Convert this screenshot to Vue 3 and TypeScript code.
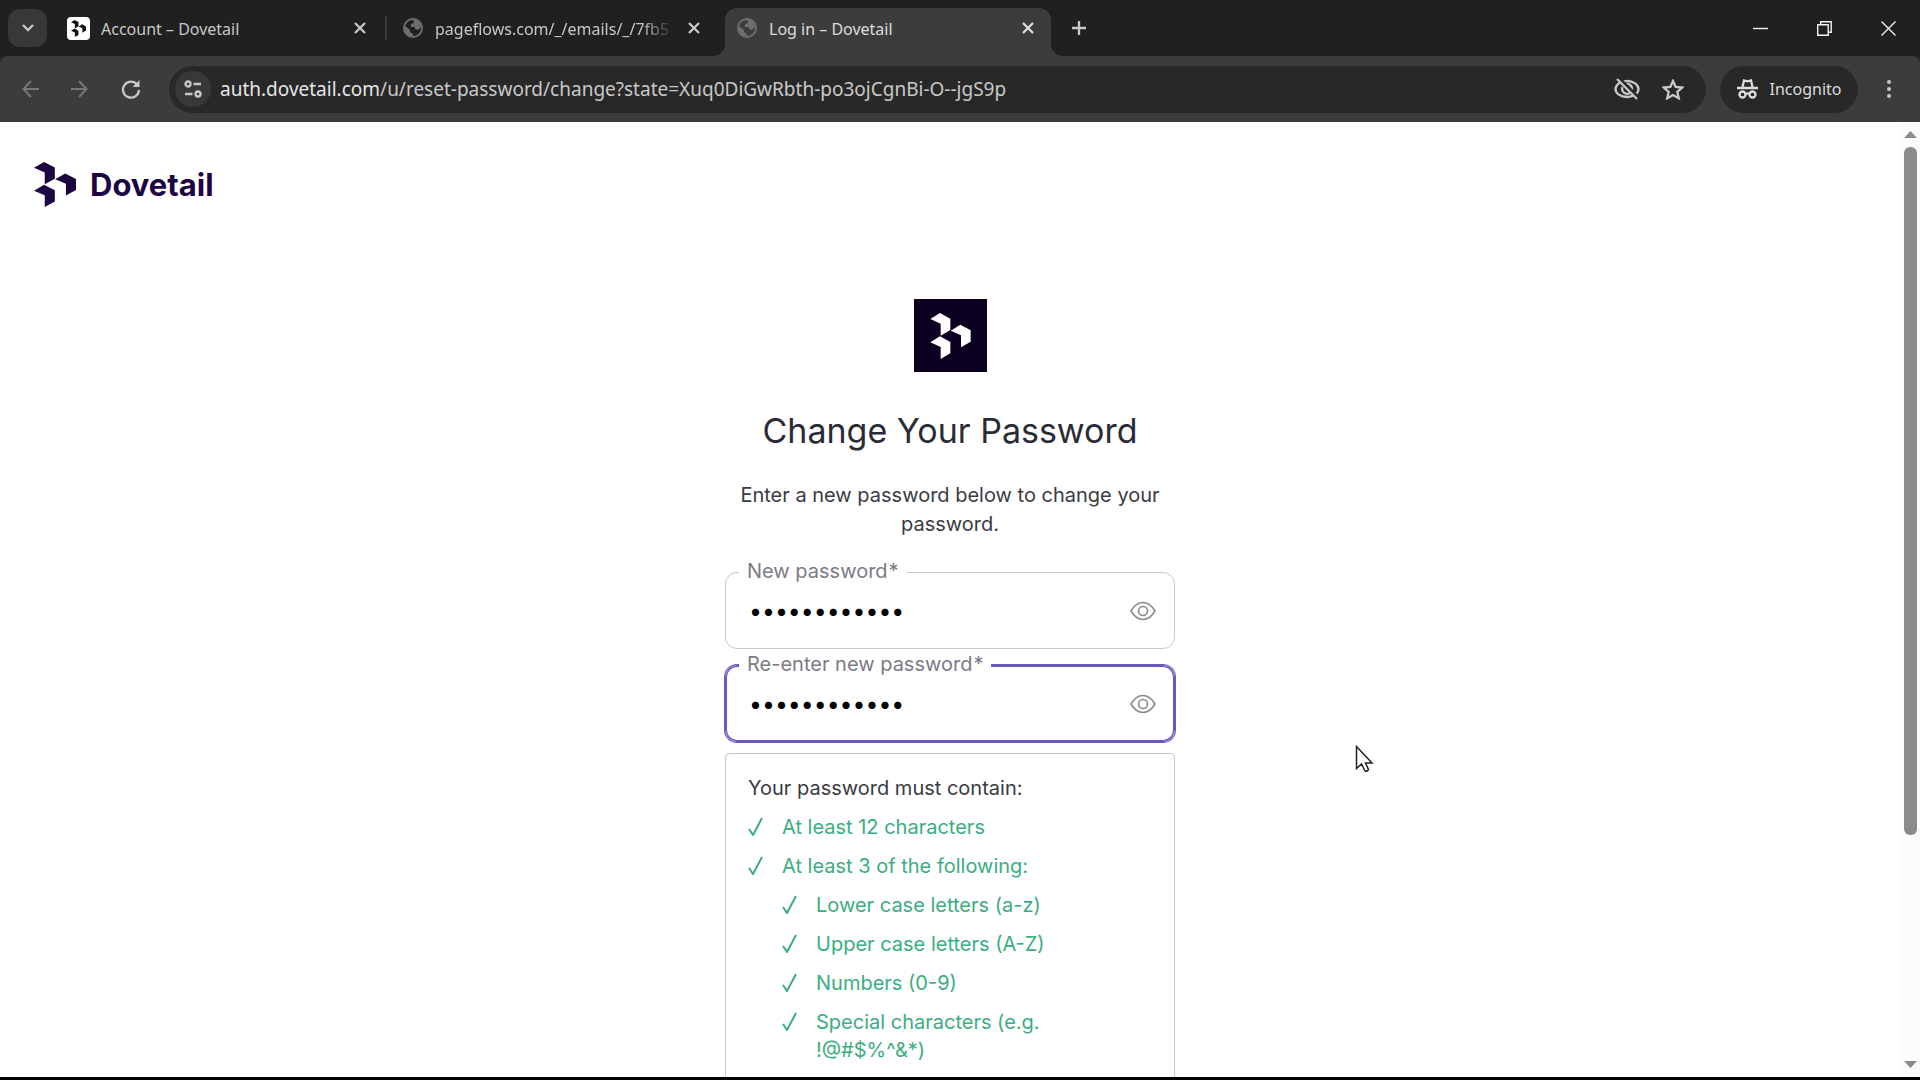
<script setup lang="ts">
import { ref } from 'vue'

interface Tab {
  title: string
  icon: 'dovetail' | 'globe'
  active: boolean
}

interface Field {
  id: string
  label: string
  focused: boolean
}

const tabs: Tab[] = [
  { title: 'Account – Dovetail', icon: 'dovetail', active: false },
  { title: 'pageflows.com/_/emails/_/7fb5', icon: 'globe', active: false },
  { title: 'Log in – Dovetail', icon: 'globe', active: true },
]

const fields: Field[] = [
  { id: 'password', label: 'New password', focused: false },
  { id: 'password-confirm', label: 'Re-enter new password', focused: true },
]

const values = ref<string[]>(['Dovetail2024', 'Dovetail2024'])

const rules: string[] = ['At least 12 characters', 'At least 3 of the following:']
const subRules: string[] = [
  'Lower case letters (a-z)',
  'Upper case letters (A-Z)',
  'Numbers (0-9)',
  'Special characters (e.g. !@#$%^&*)',
]

const mark =
  'M0 18 29 0 60 17V51L31 68V32ZM61 53 90 35 121 52V86L92 103V67ZM0 88 29 70 60 87V121L31 138V102Z'
const check = 'M1 12 5 18 14 1'
</script>

<template>
  <div class="window">
    <header class="tabstrip">
      <button class="tab-search" aria-label="Search tabs">
        <svg width="14" height="10" viewBox="0 0 14 10"><path d="M2 2l5 5 5-5" class="line thick" /></svg>
      </button>
      <div class="tabs">
        <div v-for="tab in tabs" :key="tab.title" class="tab" :class="{ active: tab.active }">
          <span v-if="tab.icon === 'dovetail'" class="favicon tile">
            <svg width="15" height="17" viewBox="0 0 121 138"><path :d="mark" fill="#111" /></svg>
          </span>
          <span v-else class="favicon">
            <svg width="20" height="20" viewBox="0 0 20 20">
              <circle cx="10" cy="10" r="9" fill="none" stroke="#6c6e71" stroke-width="2" />
              <path d="M2 8l5 4v2l3 2v3C5 19 1 15 2 8zM8 1c4 0 7 1 9 4l1 4-3 3-3-1V9H8V6l3-1V3z" fill="#6c6e71" />
            </svg>
          </span>
          <span class="tab-title" :class="{ fading: tab.title.length > 24 }">{{ tab.title }}</span>
          <button class="tab-close" aria-label="Close tab">
            <svg width="12" height="12" viewBox="0 0 12 12"><path d="M1 1l10 10M11 1L1 11" class="line thick" /></svg>
          </button>
        </div>
      </div>
      <button class="new-tab" aria-label="New tab">
        <svg width="14" height="14" viewBox="0 0 14 14"><path d="M7 0v14M0 7h14" class="line thick" /></svg>
      </button>
      <div class="window-controls">
        <button aria-label="Minimize">
          <svg width="15" height="15" viewBox="0 0 15 15"><path d="M0 7.500h15" class="line bright" /></svg>
        </button>
        <button aria-label="Restore">
          <svg width="15" height="15" viewBox="0 0 15 15">
            <path d="M.7 3.700h10.500v10.500H.7zM3.700 3.500V.7h10.500v10.500h-2.800" class="line bright" />
          </svg>
        </button>
        <button aria-label="Close">
          <svg width="15" height="15" viewBox="0 0 15 15"><path d="M.5.5l14 14M14.500.5l-14 14" class="line bright" /></svg>
        </button>
      </div>
    </header>

    <div class="toolbar-back">
      <nav class="toolbar">
        <button class="nav dim" aria-label="Back">
          <svg width="18" height="18" viewBox="0 0 18 18"><path d="M17 9H2M9 1L1.500 9 9 17" class="line" /></svg>
        </button>
        <button class="nav dim" aria-label="Forward">
          <svg width="18" height="18" viewBox="0 0 18 18"><path d="M1 9h15M9 1l7.500 8L9 17" class="line" /></svg>
        </button>
        <button class="nav" aria-label="Reload">
          <svg width="20" height="20" viewBox="0 0 20 20">
            <path d="M16.500 6A8 8 0 1 0 18 11" class="line thick" />
            <path d="M18.500 1v7h-7z" fill="currentColor" />
          </svg>
        </button>
        <div class="address">
          <button class="site-info" aria-label="Site information">
            <svg width="18" height="18" viewBox="0 0 18 18">
              <circle cx="4" cy="4" r="2.500" class="line thick" />
              <circle cx="14" cy="14" r="2.500" class="line thick" />
              <path d="M9.500 4H17M1 14h7.500" class="line thick" />
            </svg>
          </button>
          <p class="url"><b>auth.dovetail.com</b>/u/reset-password/change?state=Xuq0DiGwRbth-po3ojCgnBi-O--jgS9p</p>
          <button class="action" aria-label="Third-party cookies blocked">
            <svg width="26" height="22" viewBox="0 0 26 22">
              <ellipse cx="13" cy="11" rx="11.500" ry="8" class="line thick" />
              <path d="M8.500 9a5 5 0 0 0 8 5.500M12 6a5 5 0 0 1 6 6" class="line thick" />
              <path d="M5 0l19 19" stroke="#282828" stroke-width="3" />
              <path d="M3 1l20 20" class="line thick" />
            </svg>
          </button>
          <button class="action" aria-label="Bookmark this tab">
            <svg width="22" height="21" viewBox="0 0 22 21">
              <path d="M11 2l2.700 6 6.500.6-4.900 4.300 1.500 6.400L11 16l-5.800 3.300 1.500-6.400L1.800 8.600 8.300 8z" class="line thick" />
            </svg>
          </button>
        </div>
        <button class="incognito">
          <svg width="21" height="20" viewBox="0 0 21 20">
            <path d="M5.500 8L7 1.500l3.500.8 3.500-.8L15.500 8M0 9h21" class="line thick" />
            <circle cx="5.500" cy="15.500" r="3" class="line thick" />
            <circle cx="15.500" cy="15.500" r="3" class="line thick" />
            <path d="M8.500 15q2-1.200 4 0" class="line thick" />
          </svg>
          <span>Incognito</span>
        </button>
        <button class="menu" aria-label="Menu">
          <svg width="6" height="20" viewBox="0 0 6 20" fill="currentColor">
            <circle cx="3" cy="3" r="2" /><circle cx="3" cy="10" r="2" /><circle cx="3" cy="17" r="2" />
          </svg>
        </button>
      </nav>
    </div>

    <div class="viewport">
      <div class="page">
        <a href="#" class="brand">
          <svg width="42" height="45" viewBox="0 0 121 138" preserveAspectRatio="none"><path :d="mark" fill="#1c0540" /></svg>
          <span>Dovetail</span>
        </a>

        <main class="card">
          <div class="app-logo">
            <svg width="41" height="46" viewBox="0 0 121 138"><path :d="mark" fill="#fff" /></svg>
          </div>
          <h1>Change Your Password</h1>
          <p class="lead">Enter a new password below to change your password.</p>

          <form @submit.prevent>
            <div v-for="(field, i) in fields" :key="field.id" class="field" :class="{ focused: field.focused }">
              <label :for="field.id">{{ field.label }}<span class="star">*</span></label>
              <input :id="field.id" v-model="values[i]" type="password" autocomplete="off" />
              <button type="button" class="reveal" aria-label="Show password">
                <svg width="26" height="20" viewBox="0 0 26 20">
                  <path d="M1 10Q6 1.500 13 1.500T25 10Q20 18.500 13 18.500T1 10z" />
                  <circle cx="13" cy="10" r="4.500" />
                </svg>
              </button>
            </div>

            <section class="rules">
              <p>Your password must contain:</p>
              <ul>
                <li v-for="rule in rules" :key="rule">
                  <svg width="15" height="19" viewBox="0 0 15 19"><path :d="check" /></svg>
                  <span>{{ rule }}</span>
                </li>
              </ul>
              <ul class="nested">
                <li v-for="rule in subRules" :key="rule">
                  <svg width="15" height="19" viewBox="0 0 15 19"><path :d="check" /></svg>
                  <span>{{ rule }}</span>
                </li>
              </ul>
            </section>
          </form>
        </main>
      </div>

      <div class="scrollbar" aria-hidden="true">
        <svg width="13" height="7" viewBox="0 0 13 7"><path d="M0 7L6.500 0 13 7z" fill="#8b8b8b" /></svg>
        <div class="track"><div class="thumb"></div></div>
        <svg width="13" height="7" viewBox="0 0 13 7"><path d="M0 0h13L6.500 7z" fill="#8b8b8b" /></svg>
      </div>
    </div>

    <svg class="cursor" width="19" height="28" viewBox="0 0 19 28">
      <path d="M1.500 1.500v22l5-4.500 3.500 7q2 1 3.500-1.500L10.500 18h6.500z" fill="#fff" stroke="#222" stroke-width="1.500" />
    </svg>
  </div>
</template>

<style>
body {
  margin: 0;
  background: #000;
  overflow: hidden;
}
</style>

<style scoped>
.window {
  position: relative;
  display: flex;
  flex-direction: column;
  box-sizing: border-box;
  height: 100vh;
  border-bottom: 3px solid #000;
  font-family: 'Noto Sans', 'Open Sans', sans-serif;
  color: #c8c8c8;
}

button {
  display: flex;
  align-items: center;
  justify-content: center;
  flex: none;
  margin: 0;
  padding: 0;
  border: 0;
  background: none;
  color: inherit;
  font: inherit;
}

svg {
  flex: none;
}

.line {
  fill: none;
  stroke: currentColor;
  stroke-width: 2;
}

.thick {
  stroke-width: 2.3;
}

.bright {
  stroke: #f2f2f2;
  stroke-width: 1.4;
}

.tabstrip {
  display: flex;
  flex: none;
  height: 56px;
  background: #202020;
}

.tab-search {
  width: 39px;
  height: 38px;
  margin: 9px 10px 0 8px;
  border-radius: 12px;
  background: #383838;
}

.tabs {
  display: flex;
  gap: 8px;
}

.tab {
  position: relative;
  display: flex;
  align-items: center;
  box-sizing: border-box;
  width: 326px;
  height: 48px;
  margin-top: 8px;
  padding: 0 15px 8px 10px;
  border-radius: 12px 12px 0 0;
}

.tab:first-child::after {
  content: '';
  position: absolute;
  top: 8px;
  right: -4px;
  width: 2px;
  height: 24px;
  background: #3c3c3c;
}

.tab.active {
  background: #3c3c3c;
  color: #dcdcdc;
}

.tab.active::before,
.tab.active::after {
  content: '';
  position: absolute;
  bottom: 0;
  width: 12px;
  height: 12px;
}

.tab.active::before {
  right: 100%;
  background: radial-gradient(circle at 0 0, transparent 12px, #3c3c3c 12px);
}

.tab.active::after {
  left: 100%;
  background: radial-gradient(circle at 100% 0, transparent 12px, #3c3c3c 12px);
}

.favicon {
  display: flex;
  align-items: center;
  justify-content: center;
  flex: none;
  width: 23px;
  height: 23px;
  margin-right: 11px;
}

.tile {
  border-radius: 4px;
  background: #fff;
}

.tab-title {
  flex: 1;
  margin-right: 12px;
  padding-top: 2px;
  font-size: 16px;
  line-height: 24px;
  white-space: nowrap;
}

.fading {
  mask-image: linear-gradient(to right, #000 86%, transparent);
}

.tab-close {
  width: 16px;
  height: 24px;
}

.new-tab {
  width: 40px;
  height: 40px;
  margin: 8px 0 0 8px;
}

.window-controls {
  display: flex;
  margin-left: auto;
}

.window-controls button {
  width: 64px;
}

.toolbar-back {
  flex: none;
  background: #202020;
}

.toolbar {
  display: flex;
  align-items: center;
  height: 66px;
  padding-left: 7px;
  border-radius: 8px 8px 0 0;
  background: #3c3c3c;
}

.nav {
  width: 48px;
  height: 48px;
}

.nav:nth-child(3) {
  width: 56px;
}

.dim {
  color: #777;
}

.address {
  display: flex;
  align-items: center;
  flex: 1;
  box-sizing: border-box;
  min-width: 0;
  height: 47px;
  margin-left: 10px;
  padding: 0 10px 0 6px;
  border-radius: 24px;
  background: #282828;
}

.site-info {
  width: 36px;
  height: 36px;
  border-radius: 50%;
  background: #383838;
}

.url {
  flex: 1;
  overflow: hidden;
  margin: 0 9px;
  font-size: 19px;
  line-height: 28px;
  white-space: nowrap;
}

.url b {
  font-weight: 400;
  color: #e6e6e6;
}

.action {
  width: 46px;
  height: 40px;
}

.incognito {
  gap: 12px;
  width: 138px;
  height: 47px;
  margin-left: 14px;
  border-radius: 24px;
  background: #282828;
  color: #dcdcdc;
  font-size: 16px;
}

.menu {
  width: 62px;
  height: 47px;
}

.viewport {
  display: flex;
  flex: 1;
  min-height: 0;
  background: #fff;
}

.page {
  flex: 1;
  overflow: hidden;
  font-family: Inter, 'Liberation Sans', sans-serif;
  color: #3a3b44;
}

.brand {
  display: flex;
  align-items: center;
  width: max-content;
  gap: 14px;
  margin: 40px 0 0 34px;
  color: #1c0540;
  font-size: 31px;
  font-weight: 700;
  line-height: 45px;
  text-decoration: none;
}

.card {
  width: 450px;
  margin: 92px auto 0;
  font-size: 20px;
}

.app-logo {
  display: flex;
  align-items: center;
  justify-content: center;
  width: 73px;
  height: 73px;
  margin: 0 auto;
  background: #0b0020;
}

h1 {
  margin: 36px 0 0;
  color: #2a2c35;
  font-size: 34px;
  font-weight: 400;
  line-height: 46px;
  text-align: center;
}

.lead {
  margin: 27px 0 0;
  line-height: 29px;
  text-align: center;
}

form {
  padding-top: 33px;
}

.field {
  position: relative;
  display: flex;
  align-items: center;
  box-sizing: border-box;
  height: 77px;
  margin-bottom: 16px;
  padding: 0 18px 0 23px;
  border: 1px solid #c9c9cd;
  border-radius: 12px;
}

.field.focused {
  margin-bottom: 11px;
  border-color: #6a58bd;
  box-shadow: 0 0 0 1px #6a58bd, inset 0 0 0 1px #6a58bd;
}

label {
  position: absolute;
  top: -16px;
  left: 13px;
  padding: 0 8px;
  background: #fff;
  color: #7b7b86;
  line-height: 28px;
}

.star {
  margin-left: 1px;
}

input {
  flex: 1;
  min-width: 0;
  padding: 0;
  border: 0;
  outline: 0;
  background: none;
  color: #000;
  font: 23px Inter, sans-serif;
}

.reveal svg {
  fill: none;
  stroke: #8a8a8a;
  stroke-width: 1.6;
}

.rules {
  padding: 20px 36px 40px 22px;
  border: 1px solid #c9c9cd;
  border-radius: 4px;
}

.rules p {
  margin: 0;
  line-height: 28px;
}

ul {
  margin: 0;
  padding: 0;
  list-style: none;
  color: #3aae80;
}

.nested {
  padding-left: 34px;
}

li {
  display: flex;
  align-items: flex-start;
  gap: 19px;
  margin-top: 11px;
  line-height: 28px;
}

li svg {
  margin-top: 4px;
  fill: none;
  stroke: currentColor;
  stroke-width: 2;
}

.scrollbar {
  display: flex;
  flex-direction: column;
  align-items: center;
  flex: none;
  box-sizing: border-box;
  width: 20px;
  padding: 9px 0;
  background: #fcfcfc;
}

.track {
  flex: 1;
  padding: 9px 0;
}

.thumb {
  width: 13px;
  height: 76%;
  border-radius: 6px;
  background: #8b8b8b;
}

.cursor {
  position: absolute;
  top: 745px;
  left: 1355px;
}
</style>
